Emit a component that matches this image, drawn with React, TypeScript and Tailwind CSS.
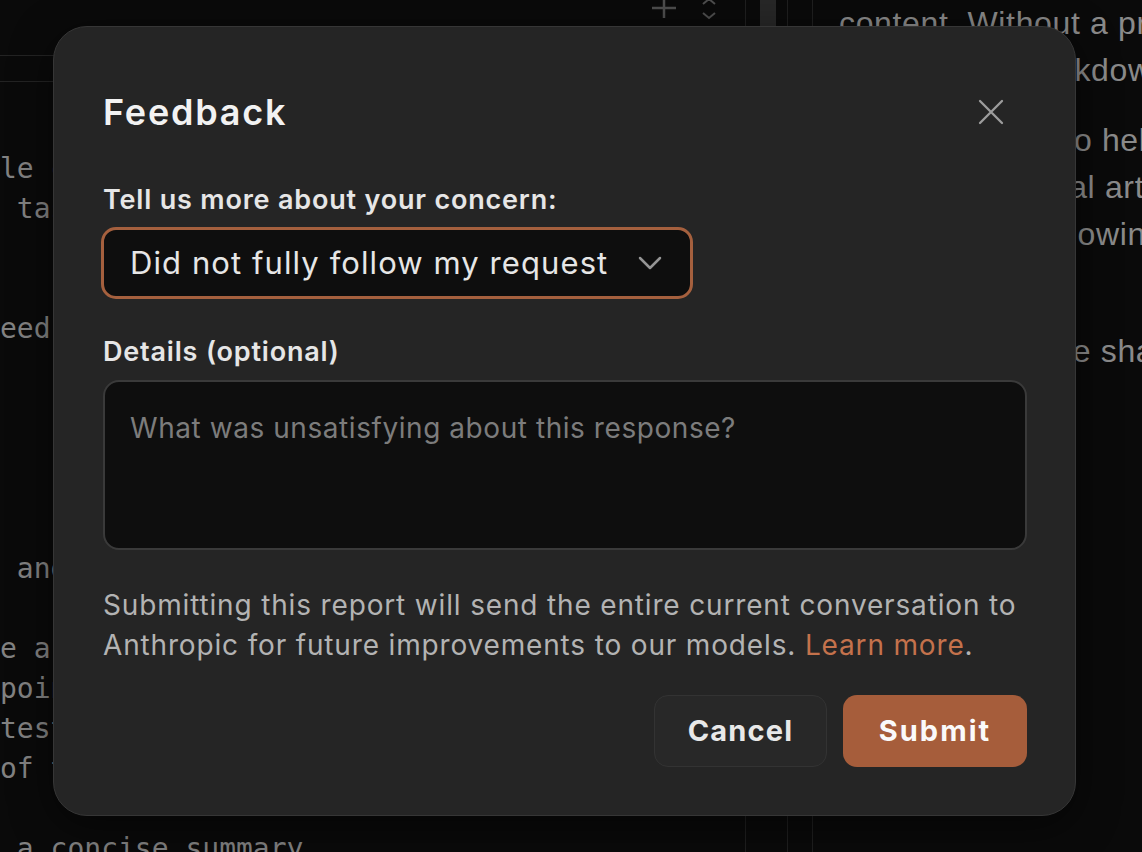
import React from 'react';

const codeLines: string[] = [
    'le changes across the codebase',
    ' tasks that need careful review',
    '',
    '',
    'eed to verify the output first',
    '',
    '',
    '',
    '',
    '',
    ' and then summarize the result',
    '',
    'e a list of the key findings',
    'points, including any caveats',
    'tests and their current status',
    'of the changes that were made',
    '',
    ' a concise summary',
];

const App: React.FC = () => {
    return (
        <div className="relative h-[852px] w-[1142px] overflow-hidden bg-[#0a0a0a]">
            {/* Background app */}
            <div className="flex h-full">
                {/* Code pane */}
                <div className="flex w-[746px] shrink-0 flex-col border-r border-[#1f1f1f]">
                    <div className="flex h-[57px] items-start justify-end gap-[24px] border-b border-[#232323] pr-[28px]">
                        <svg width="26" height="20" viewBox="0 0 26 20" className="-mt-[2px]">
                            <path d="M13 0v20M1 10h24" stroke="#4d4d4d" strokeWidth="2.5" />
                        </svg>
                        <svg width="16" height="22" viewBox="0 0 16 22" className="-mt-[2px]">
                            <path d="M2 6l6-5 6 5M2 15l6 5 6-5" fill="none" stroke="#4d4d4d" strokeWidth="2" />
                        </svg>
                    </div>
                    <div className="h-[27px] border-b border-[#232323]" />
                    <div className="overflow-hidden pt-[67px] font-['DejaVu_Sans_Mono',monospace] text-[28px] text-[#828282]">
                        {codeLines.map((line, idx) => (
                            <div key={idx} className="h-[40px] whitespace-pre leading-[40px]">
                                {line}
                            </div>
                        ))}
                    </div>
                </div>

                {/* Scrollbar / gutter */}
                <div className="w-[42px] shrink-0 border-r border-[#1f1f1f] pl-[14px]">
                    <div className="h-[120px] w-[16px] bg-[#272727]" />
                </div>
                <div className="w-[25px] shrink-0 border-r border-[#1f1f1f]" />

                {/* Right pane */}
                <div className="flex-1 overflow-hidden pl-[26px] font-['Liberation_Sans',Arial,sans-serif] text-[32px] leading-[47px] tracking-[0.02em] text-[#8a8a8a]">
                    <div className="mb-[23px]">
                        <div className="whitespace-nowrap">content. Without a proper</div>
                        <div className="whitespace-nowrap">renders the markdown</div>
                    </div>
                    <div className="mb-[23px]">
                        <div className="whitespace-nowrap">Use the library to help</div>
                        <div className="whitespace-nowrap">and avoids visual artifacts</div>
                        <div className="whitespace-nowrap">and then the following</div>
                        <div className="whitespace-nowrap">items.</div>
                    </div>
                    <div>
                        <div className="whitespace-nowrap">Then, update the shared</div>
                    </div>
                </div>
            </div>

            {/* Feedback modal */}
            <div className="absolute left-[53px] top-[26px] flex w-[1023px] flex-col rounded-[34px] border border-[#363636] bg-[#252525] pb-[48px] pl-[49px] pr-[48px] pt-[65px] font-['Inter',sans-serif] shadow-[0_10px_40px_rgba(0,0,0,0.5)]">
                <div className="flex h-[40px] items-center justify-between">
                    <h2 className="text-[36px] font-semibold leading-[40px] tracking-[0.05em] text-[#f2f2f2]">Feedback</h2>
                    <button className="mr-[23px] flex h-[26px] w-[26px] items-center justify-center">
                        <svg width="26" height="26" viewBox="0 0 26 26">
                            <path d="M2 2l22 22M24 2L2 24" stroke="#9d9d9d" strokeWidth="2.3" strokeLinecap="round" />
                        </svg>
                    </button>
                </div>

                <label className="mt-[52px] h-[32px] text-[27px] font-semibold leading-[32px] tracking-[0.03em] text-[#e6e6e6]">
                    Tell us more about your concern:
                </label>
                <div className="-ml-[2px] mt-[11px] flex h-[72px] w-[592px] items-center justify-between rounded-[15px] border-[3px] border-[#a5603e] bg-[#0e0e0e] pl-[26px] pr-[28px]">
                    <span className="text-[31px] leading-[36px] tracking-[0.035em] text-[#e6e6e6]">Did not fully follow my request</span>
                    <svg width="24" height="14" viewBox="0 0 24 14">
                        <path d="M2 2l10 10L22 2" fill="none" stroke="#959595" strokeWidth="2.5" strokeLinecap="round" strokeLinejoin="round" />
                    </svg>
                </div>

                <label className="mt-[37px] h-[32px] text-[27px] font-semibold leading-[32px] tracking-[0.03em] text-[#e6e6e6]">
                    Details (optional)
                </label>
                <div className="mt-[12px] h-[170px] rounded-[16px] border-2 border-[#3a3a3a] bg-[#0e0e0e] px-[25px] pt-[28px]">
                    <span className="text-[28px] leading-[36px] tracking-[0.02em] text-[#7c7c7c]">
                        What was unsatisfying about this response?
                    </span>
                </div>

                <p className="mt-[35px] whitespace-nowrap text-[28px] leading-[40px] tracking-[0.03em] text-[#b3b3b3]">
                    Submitting this report will send the entire current conversation to
                    <br />
                    Anthropic for future improvements to our models. <span className="text-[#c4724c]">Learn more</span>.
                </p>

                <div className="mt-[30px] flex justify-end gap-[16px]">
                    <button className="h-[72px] w-[173px] rounded-[14px] border border-[#333333] bg-[#282828] text-[29px] font-bold tracking-[0.04em] text-[#e8e8e8]">
                        Cancel
                    </button>
                    <button className="h-[72px] w-[184px] rounded-[14px] bg-[#a65d3b] text-[29px] font-bold tracking-[0.07em] text-[#fafafa]">
                        Submit
                    </button>
                </div>
            </div>
        </div>
    );
};

export default App;
